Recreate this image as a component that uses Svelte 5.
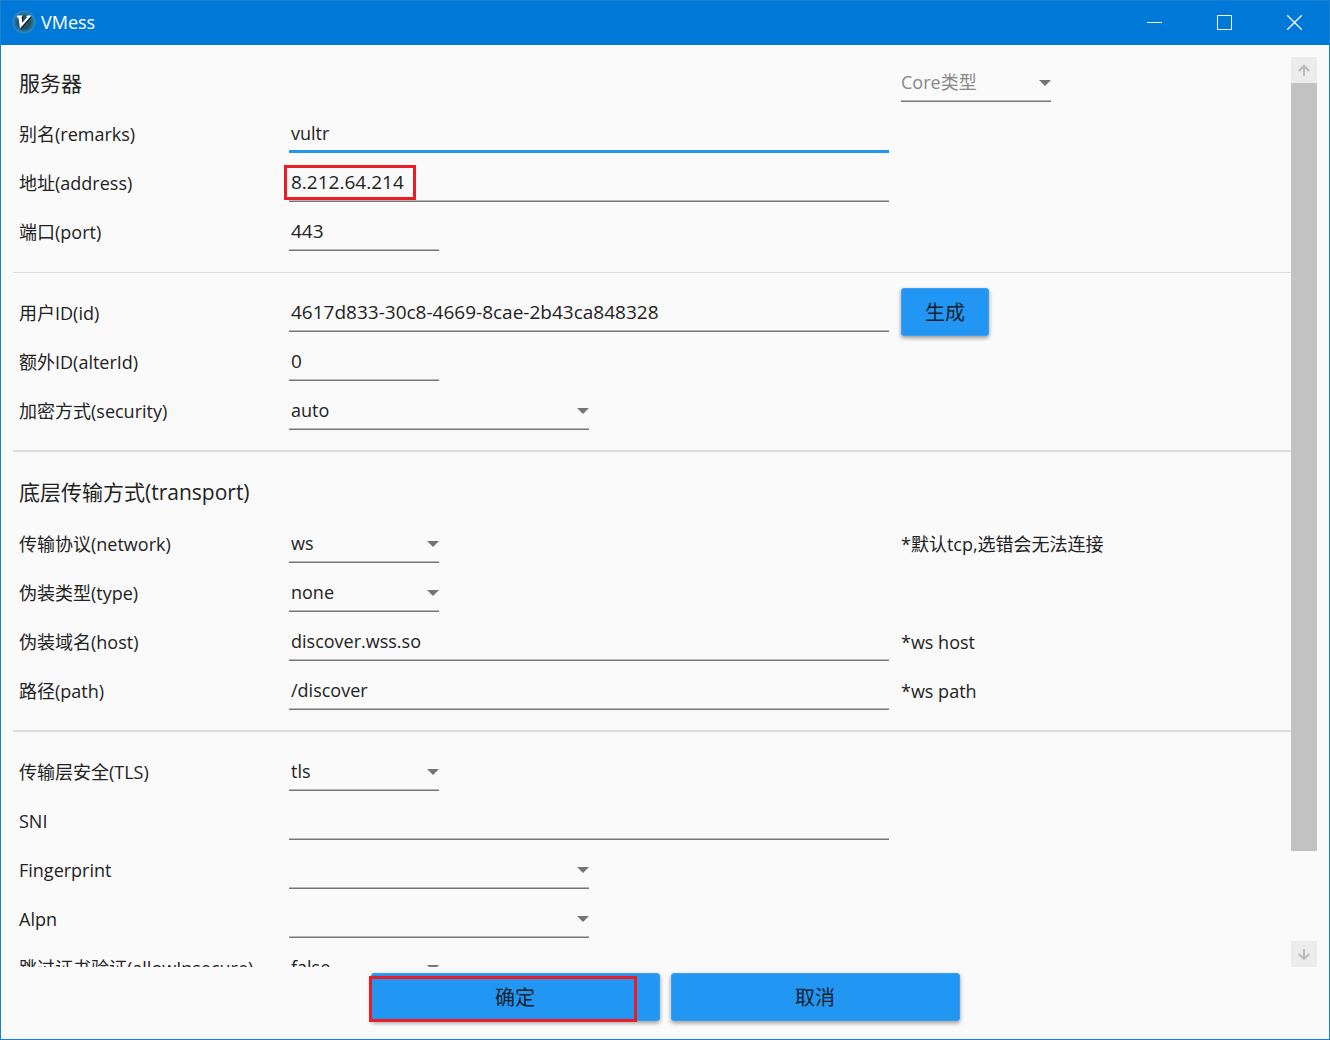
<script>
  let form = {
    core: '',
    remarks: 'vultr',
    address: '8.212.64.214',
    port: '443',
    id: '4617d833-30c8-4669-8cae-2b43ca848328',
    alterId: '0',
    security: 'auto',
    network: 'ws',
    type: 'none',
    host: 'discover.wss.so',
    path: '/discover',
    tls: 'tls',
    sni: '',
    fingerprint: '',
    alpn: '',
    insecure: 'false'
  };

  const sections = [
    {
      title: '服务器',
      core: true,
      rows: [
        { key: 'remarks', label: '别名(remarks)', size: 'full', active: true },
        { key: 'address', label: '地址(address)', size: 'full', numeric: true, marked: true },
        { key: 'port', label: '端口(port)', size: 'short', numeric: true }
      ]
    },
    {
      rows: [
        { key: 'id', label: '用户ID(id)', size: 'full', numeric: true, button: '生成' },
        { key: 'alterId', label: '额外ID(alterId)', size: 'short', numeric: true },
        { key: 'security', label: '加密方式(security)', size: 'medium', options: ['auto', 'aes-128-gcm', 'none'] }
      ]
    },
    {
      title: '底层传输方式(transport)',
      strong: true,
      rows: [
        { key: 'network', label: '传输协议(network)', size: 'short', options: ['ws', 'tcp', 'kcp'], note: '*默认tcp,选错会无法连接' },
        { key: 'type', label: '伪装类型(type)', size: 'short', options: ['none', 'http'] },
        { key: 'host', label: '伪装域名(host)', size: 'full', note: '*ws host' },
        { key: 'path', label: '路径(path)', size: 'full', note: '*ws path' }
      ]
    },
    {
      strong: true,
      rows: [
        { key: 'tls', label: '传输层安全(TLS)', size: 'short', options: ['tls', ''] },
        { key: 'sni', label: 'SNI', size: 'full' },
        { key: 'fingerprint', label: 'Fingerprint', size: 'medium', options: ['', 'chrome', 'firefox'] },
        { key: 'alpn', label: 'Alpn', size: 'medium', options: ['', 'h2', 'http/1.1'] },
        { key: 'insecure', label: '跳过证书验证(allowInsecure)', size: 'short', options: ['false', 'true'] }
      ]
    }
  ];

  let pane;
  const thumb = 89.5;
  const scroll = (step) => pane.scrollBy({ top: step });
</script>

<div class="window">
  <header class="titlebar">
    <svg class="logo" viewBox="0 0 24 24" aria-hidden="true">
      <circle cx="12" cy="12" r="11.5" fill="#2489c4" />
      <circle cx="12" cy="12" r="9.8" fill="#246f96" />
      <circle cx="12" cy="12.5" r="7.6" fill="#245468" />
      <path d="M7 7 12 6.2 10.8 8.6 11.6 14 18.6 6.4 19.6 7.2 9.2 19.4z" fill="#0b2733" />
      <path d="M5 5.6H10.8L9.6 7.2 10.4 12.8 15.2 7 14.2 6.8 15.2 5.6H19.4L8 18.4 6.4 7.4H4.8z" fill="#fff" />
    </svg>
    <h1>VMess</h1>
    <div class="controls">
      <button type="button" aria-label="Minimize">
        <svg viewBox="0 0 15 15"><path d="M0 7.5H15" /></svg>
      </button>
      <button type="button" aria-label="Maximize">
        <svg viewBox="0 0 15 15"><path d="M.5.5H14.5V14.5H.5z" /></svg>
      </button>
      <button type="button" aria-label="Close">
        <svg viewBox="0 0 15 15"><path d="M.3.3 14.7 14.7M14.7.3.3 14.7" stroke-width="1.3" /></svg>
      </button>
    </div>
  </header>

  <main class="body">
    <div class="pane" bind:this={pane}>
      {#each sections as section}
        <section class:strong={section.strong}>
          {#if section.title}
            <div class="heading">
              <h2>{section.title}</h2>
              {#if section.core}
                <div class="field short core">
                  <select aria-label="Core类型" bind:value={form.core}>
                    <option value="">Core类型</option>
                    <option value="xray">Xray</option>
                  </select>
                  <svg class="arrow" viewBox="0 0 12 6" aria-hidden="true"><path d="M0 0H12L6 6z" /></svg>
                </div>
              {/if}
            </div>
          {/if}
          {#each section.rows as row}
            <div class="row">
              <label for={row.key}>{row.label}</label>
              <div class="field {row.size}" class:active={row.active} class:numeric={row.numeric}>
                {#if row.options}
                  <select id={row.key} bind:value={form[row.key]}>
                    {#each row.options as option}
                      <option value={option}>{option}</option>
                    {/each}
                  </select>
                  <svg class="arrow" viewBox="0 0 12 6" aria-hidden="true"><path d="M0 0H12L6 6z" /></svg>
                {:else}
                  <input id={row.key} type="text" spellcheck="false" bind:value={form[row.key]} />
                {/if}
                {#if row.marked}<span class="mark mark-address"></span>{/if}
              </div>
              {#if row.note}<span class="note">{row.note}</span>{/if}
              {#if row.button}<button type="button" class="action generate">{row.button}</button>{/if}
            </div>
          {/each}
        </section>
      {/each}
    </div>

    <div class="scrollbar">
      <button type="button" aria-label="Scroll up" on:click={() => scroll(-49)}>
        <svg viewBox="0 0 12 12"><path d="M6 12V2M.8 7 6 2 11.2 7" /></svg>
      </button>
      <div class="track"><div class="thumb" style="height: {thumb}%"></div></div>
      <button type="button" aria-label="Scroll down" on:click={() => scroll(49)}>
        <svg viewBox="0 0 12 12"><path d="M6 1V11M.8 6 6 11 11.2 6" /></svg>
      </button>
    </div>
  </main>

  <footer>
    <div class="confirm">
      <button type="button" class="action">确定</button>
      <span class="mark mark-confirm"></span>
    </div>
    <button type="button" class="action">取消</button>
  </footer>
</div>

<style>
  :global(body) {
    margin: 0;
  }

  .window,
  .window * {
    box-sizing: border-box;
  }

  .window {
    display: flex;
    flex-direction: column;
    height: 100vh;
    border: 1px solid #1a80d4;
    background: #fafafa;
    color: #222;
    font: 18px/24px 'Open Sans', 'Noto Sans CJK SC', sans-serif;
  }

  button,
  input,
  select {
    margin: 0;
    padding: 0;
    border: 0;
    border-radius: 0;
    outline: 0;
    background: none;
    color: inherit;
    font: inherit;
  }

  .titlebar {
    display: flex;
    align-items: center;
    height: 44px;
    flex: none;
    padding: 0 0 2px 11px;
    background: #0078d7;
    color: #fff;
  }

  .logo {
    width: 24px;
    height: 24px;
  }

  h1 {
    flex: 1;
    margin: 0 0 0 5px;
    font-size: 18px;
    font-weight: 400;
  }

  .controls {
    display: flex;
    align-self: stretch;
  }

  .controls button {
    display: grid;
    place-items: center;
    width: 70px;
  }

  .controls svg {
    width: 15px;
    height: 15px;
    fill: none;
    stroke: #fff;
  }

  .body {
    display: flex;
    flex: 1;
    min-height: 0;
    padding: 12px 12px 0;
  }

  .pane {
    flex: 1;
    min-width: 0;
    overflow-y: auto;
    scrollbar-width: none;
  }

  section {
    padding: 0 6px 21px;
  }

  section + section {
    padding-top: 10px;
    padding-bottom: 20px;
    border-top: 1px solid #ddd;
  }

  section + .strong {
    border-top-width: 2px;
  }

  .heading,
  .row {
    display: grid;
    grid-template-columns: 270px 600px 1fr;
  }

  .heading {
    grid-template-columns: 870px 1fr;
    height: 47px;
    padding-top: 7px;
  }

  .strong .heading {
    height: 52px;
    padding-top: 11px;
  }

  h2 {
    margin: 0;
    font-size: 21px;
    font-weight: 400;
    line-height: 38px;
  }

  .row {
    height: 49px;
    padding-top: 11px;
  }

  label,
  .note {
    line-height: 38px;
  }

  .note,
  .generate,
  .core {
    margin-left: 12px;
  }

  .field {
    position: relative;
    display: grid;
    height: 38px;
    border-bottom: 1px solid #757575;
    box-shadow: inset 0 -1px #b8b8b8;
  }

  .field.active {
    border-bottom: 3px solid #2196f3;
    box-shadow: none;
  }

  .field.numeric {
    font-size: 19px;
  }

  .full {
    width: 600px;
  }

  .medium {
    width: 300px;
  }

  .short {
    width: 150px;
  }

  input,
  select {
    grid-area: 1 / 1;
    width: 100%;
    height: 36px;
    padding-left: 2px;
    appearance: none;
  }

  .active input {
    height: 35px;
  }

  .core select {
    padding: 0;
    color: #888;
  }

  option {
    color: #222;
  }

  .arrow {
    grid-area: 1 / 1;
    place-self: center end;
    width: 12px;
    height: 6px;
    fill: #757575;
    pointer-events: none;
  }

  .action {
    height: 48px;
    padding-top: 2px;
    border: 1px solid #3d9eed;
    border-radius: 3px;
    background: #2196f3;
    box-shadow: 0 2px 4px rgba(0, 0, 0, 0.4);
    color: #14212b;
    font-size: 20px;
  }

  .generate {
    width: 88px;
    margin-top: -6px;
  }

  .scrollbar {
    display: flex;
    flex-direction: column;
    width: 26px;
  }

  .scrollbar button {
    display: grid;
    place-items: center;
    height: 26px;
    background: #ececec;
  }

  .scrollbar svg {
    width: 12px;
    height: 12px;
    fill: none;
    stroke: #bababa;
    stroke-width: 2;
  }

  .track {
    flex: 1;
  }

  .thumb {
    background: #c2c2c2;
  }

  footer {
    display: flex;
    flex: none;
    justify-content: center;
    gap: 11px;
    padding: 6px 0 18px;
  }

  footer .action {
    width: 289px;
  }

  .confirm {
    position: relative;
  }

  .mark {
    position: absolute;
    border: 3px solid #ed1c24;
    pointer-events: none;
  }

  .mark-address {
    top: 1px;
    left: -5px;
    width: 132px;
    height: 35px;
  }

  .mark-confirm {
    top: 3px;
    left: -2px;
    width: 268px;
    height: 46px;
  }
</style>
